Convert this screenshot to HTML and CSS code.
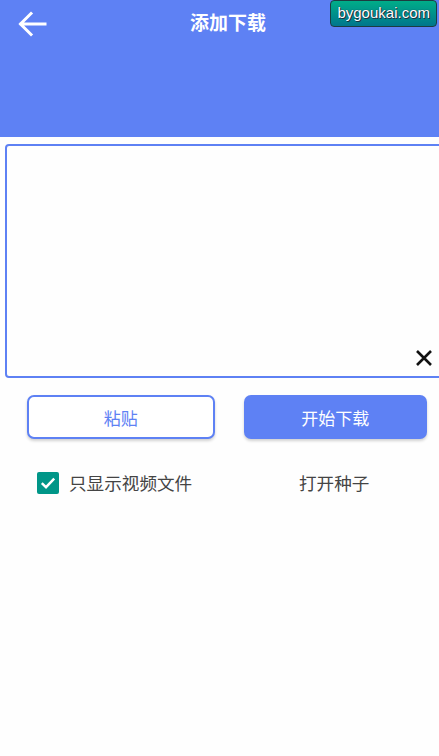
FILE: index.html
```html
<!DOCTYPE html>
<html lang="zh-CN">
<head>
  <meta charset="UTF-8">
  <meta name="viewport" content="width=device-width, initial-scale=1.0">
  <title>添加下载</title>
  <link rel="stylesheet" href="styles.css">
</head>
<body>
  <div class="app">
    <header class="topbar">
      <div class="topbar-row">
        <button class="back-btn" aria-label="返回">
          <svg width="30" height="28" viewBox="0 0 30 28">
            <path d="M28 14H4M14 3.5L3.5 14L14 24.5" fill="none" stroke="#fff" stroke-width="3" stroke-linecap="square"/>
          </svg>
        </button>
        <h1 class="title">添加下载</h1>
      </div>
      <div class="badge">bygoukai.com</div>
    </header>

    <div class="link-box">
      <textarea class="link-input"></textarea>
      <button class="clear-btn" aria-label="清除">
        <svg width="18" height="18" viewBox="0 0 18 18">
          <path d="M2 2L16 16M16 2L2 16" stroke="#111" stroke-width="2.6"/>
        </svg>
      </button>
    </div>

    <div class="actions">
      <button class="btn btn-outline">粘贴</button>
      <button class="btn btn-fill">开始下载</button>
    </div>

    <div class="options">
      <label class="check">
        <span class="check-box">
          <svg width="16" height="14" viewBox="0 0 16 14">
            <path d="M1.8 7.2L6 11.2L14.2 2.6" fill="none" stroke="#fff" stroke-width="2.4"/>
          </svg>
        </span>
        只显示视频文件
      </label>
      <span class="open-seed">打开种子</span>
    </div>
  </div>
</body>
</html>
```

FILE: styles.css
```css
body {
  margin: 0;
  background-color: #fefefe;
  font-family: Roboto, "Noto Sans CJK SC", sans-serif;
  overflow: hidden;
}

.app {
  width: 439px;
  height: 756px;
  overflow: hidden;
}

.topbar {
  position: relative;
  height: 137px;
  background-color: #5e81f4;
}

.topbar-row {
  display: flex;
  align-items: center;
  height: 48px;
}

.back-btn {
  display: flex;
  align-items: center;
  justify-content: center;
  width: 30px;
  height: 28px;
  margin-left: 17px;
  margin-top: -1px;
  padding: 0;
  border: none;
  background: none;
}

.title {
  flex: 1;
  margin: 0;
  padding-right: 30px;
  text-align: center;
  color: #fff;
  font-size: 19px;
  font-weight: bold;
  line-height: 48px;
}

.badge {
  position: absolute;
  top: 0;
  right: 2px;
  padding: 2px 6px 3px;
  border: 1px solid #1d3c40;
  border-radius: 4px;
  background: linear-gradient(#00ad88, #00768c);
  color: #fff;
  font-family: "Liberation Sans", Arial, sans-serif;
  font-size: 15px;
  line-height: 20px;
  text-shadow: 0 0 1px #123, 1px 1px 0 #234;
}

.link-box {
  position: relative;
  margin: 7px 0 0 5px;
  width: 450px;
  height: 234px;
  box-sizing: border-box;
  border: 2px solid #5e81f4;
  border-radius: 4px;
}

.link-input {
  width: 100%;
  height: 100%;
  box-sizing: border-box;
  border: none;
  outline: none;
  resize: none;
  background: transparent;
}

.clear-btn {
  position: absolute;
  right: 19px;
  bottom: 8px;
  width: 20px;
  height: 20px;
  padding: 1px;
  border: none;
  background: none;
}

.actions {
  display: flex;
  gap: 29px;
  padding: 17px 12px 0 27px;
}

.btn {
  flex: 1;
  height: 44px;
  border-radius: 7px;
  font-family: Roboto, "Noto Sans CJK SC", sans-serif;
  font-size: 17px;
  box-shadow: 0 2px 3px rgba(0, 0, 0, 0.18);
}

.btn-outline {
  border: 2px solid #5e81f4;
  background-color: #fff;
  color: #5e81f4;
}

.btn-fill {
  border: none;
  background-color: #5e81f4;
  color: #fff;
}

.options {
  display: flex;
  align-items: center;
  padding: 31px 0 0 37px;
  font-size: 17.6px;
  color: #444;
}

.check {
  display: flex;
  align-items: center;
  gap: 10px;
  width: 262px;
}

.check-box {
  display: flex;
  align-items: center;
  justify-content: center;
  width: 22px;
  height: 22px;
  border-radius: 2px;
  background-color: #009688;
}
```
